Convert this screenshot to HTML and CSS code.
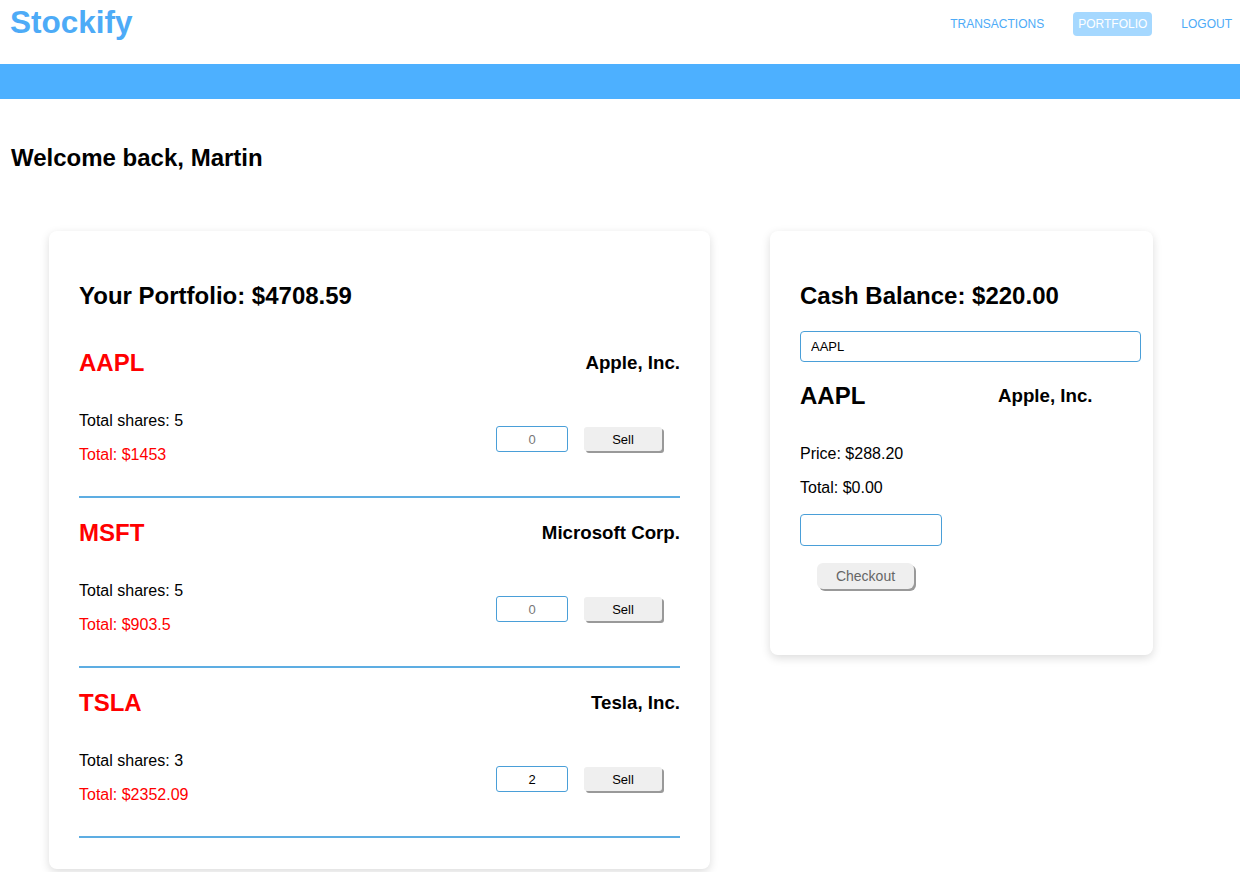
FILE: index.html
```html
<!DOCTYPE html>
<html lang="en">
<head>
<meta charset="utf-8">
<title>Stockify</title>
<link rel="stylesheet" href="styles.css">
</head>
<body>
<header class="topbar">
  <div class="logo">Stockify</div>
  <nav class="nav">
    <a class="nav-link">TRANSACTIONS</a>
    <a class="nav-link active">PORTFOLIO</a>
    <a class="nav-link">LOGOUT</a>
  </nav>
</header>
<div class="band"></div>
<h2 class="welcome">Welcome back, Martin</h2>
<main class="content">
  <section class="card portfolio">
    <h2 class="card-title">Your Portfolio: $4708.59</h2>

    <div class="stock">
      <div class="stock-head">
        <span class="ticker red">AAPL</span>
        <span class="company">Apple, Inc.</span>
      </div>
      <div class="stock-body">
        <div class="lines">
          <p class="line">Total shares: 5</p>
          <p class="line red">Total: $1453</p>
        </div>
        <div class="actions">
          <input class="qty" type="text" value="0">
          <button class="sell">Sell</button>
        </div>
      </div>
    </div>

    <div class="stock">
      <div class="stock-head">
        <span class="ticker red">MSFT</span>
        <span class="company">Microsoft Corp.</span>
      </div>
      <div class="stock-body">
        <div class="lines">
          <p class="line">Total shares: 5</p>
          <p class="line red">Total: $903.5</p>
        </div>
        <div class="actions">
          <input class="qty" type="text" value="0">
          <button class="sell">Sell</button>
        </div>
      </div>
    </div>

    <div class="stock">
      <div class="stock-head">
        <span class="ticker red">TSLA</span>
        <span class="company">Tesla, Inc.</span>
      </div>
      <div class="stock-body">
        <div class="lines">
          <p class="line">Total shares: 3</p>
          <p class="line red">Total: $2352.09</p>
        </div>
        <div class="actions">
          <input class="qty dark" type="text" value="2">
          <button class="sell">Sell</button>
        </div>
      </div>
    </div>
  </section>

  <section class="card cash">
    <h2 class="card-title">Cash Balance: $220.00</h2>
    <input class="search" type="text" value="AAPL">
    <div class="quote-head">
      <span class="ticker">AAPL</span>
      <span class="company">Apple, Inc.</span>
    </div>
    <p class="line price">Price: $288.20</p>
    <p class="line">Total: $0.00</p>
    <input class="amount" type="text" value="">
    <button class="checkout">Checkout</button>
  </section>
</main>
</body>
</html>
```
FILE: styles.css
```css
* { box-sizing: border-box; }
html, body { margin: 0; padding: 0; background: #fff; }
body {
  font-family: "Liberation Sans", Arial, sans-serif;
  color: #000;
  width: 1240px;
  height: 872px;
  overflow: hidden;
}
.topbar {
  height: 64px;
  display: flex;
  justify-content: space-between;
  align-items: flex-start;
  padding: 0 3px 0 10px;
}
.logo {
  font-size: 31.5px;
  font-weight: bold;
  color: #4dabf7;
  line-height: 37px;
  margin-top: 4px;
}
.nav {
  display: flex;
  align-items: center;
  margin-top: 12px;
}
.nav-link {
  font-size: 12px;
  color: #4dabf7;
  padding: 5px 5px;
  margin-left: 24px;
  border-radius: 4px;
  line-height: 14px;
}
.nav-link.active {
  background: #a5d8ff;
  color: #fff;
}
.band {
  height: 35px;
  background: #4db0ff;
}
.welcome {
  font-size: 24px;
  font-weight: bold;
  margin: 45px 0 0 11px;
  line-height: 28px;
}
.content {
  display: flex;
  align-items: flex-start;
  gap: 60px;
  padding-left: 49px;
  margin-top: 59px;
}
.card {
  background: #fff;
  border-radius: 8px;
  box-shadow: 0 3px 10px rgba(0, 0, 0, 0.14);
  padding: 30px;
}
.portfolio { width: 661px; padding-bottom: 31px; }
.cash { width: 383px; padding-bottom: 66px; }
.card-title {
  font-size: 24px;
  font-weight: bold;
  line-height: 28px;
  margin: 21px 0 0 0;
}
.red { color: #f00; }
.stock {
  border-bottom: 2px solid #5dade2;
  padding-bottom: 32px;
  margin-top: 21px;
}
.portfolio .card-title + .stock { margin-top: 39px; }
.stock-head {
  display: flex;
  justify-content: space-between;
  align-items: center;
  height: 28px;
}
.ticker {
  font-size: 24px;
  font-weight: bold;
  line-height: 28px;
}
.company {
  font-size: 18.72px;
  font-weight: bold;
  line-height: 22px;
}
.stock-body {
  display: flex;
  justify-content: space-between;
  align-items: center;
  margin-top: 35px;
}
.line {
  font-size: 16px;
  line-height: 18px;
  margin: 0;
}
.lines .line + .line { margin-top: 16px; }
.actions {
  display: flex;
  align-items: center;
  gap: 16px;
  margin-right: 18px;
  padding-top: 2px;
}
.qty {
  width: 72px;
  height: 26px;
  border: 1px solid #4a9fd8;
  border-radius: 3px;
  text-align: center;
  font-family: "Liberation Sans", Arial, sans-serif;
  font-size: 13px;
  color: #777;
  padding: 0;
  outline: none;
}
.qty.dark { color: #000; }
.sell {
  width: 78px;
  height: 24px;
  border: none;
  border-radius: 3px;
  background: #efefef;
  box-shadow: 2px 2px 0 #999;
  font-family: "Liberation Sans", Arial, sans-serif;
  font-size: 13px;
  color: #000;
  padding: 0;
}
.search {
  display: block;
  width: calc(100% + 18px);
  height: 31px;
  margin-top: 21px;
  border: 1px solid #4a9fd8;
  border-radius: 4px;
  padding: 0 10px;
  font-family: "Liberation Sans", Arial, sans-serif;
  font-size: 13px;
  color: #000;
  outline: none;
}
.quote-head {
  display: grid;
  grid-template-columns: 198px auto;
  align-items: center;
  margin-top: 20px;
  height: 28px;
}
.price { margin-top: 35px; }
.cash .line + .line { margin-top: 16px; }
.amount {
  display: block;
  width: 142px;
  height: 32px;
  margin-top: 17px;
  border: 1px solid #4a9fd8;
  border-radius: 4px;
  outline: none;
}
.checkout {
  display: block;
  width: 97px;
  height: 26px;
  margin: 17px 0 0 17px;
  border: none;
  border-radius: 6px;
  background: #efefef;
  box-shadow: 2px 2px 0 #999;
  font-family: "Liberation Sans", Arial, sans-serif;
  font-size: 14px;
  color: #666;
  padding: 0;
}
```
